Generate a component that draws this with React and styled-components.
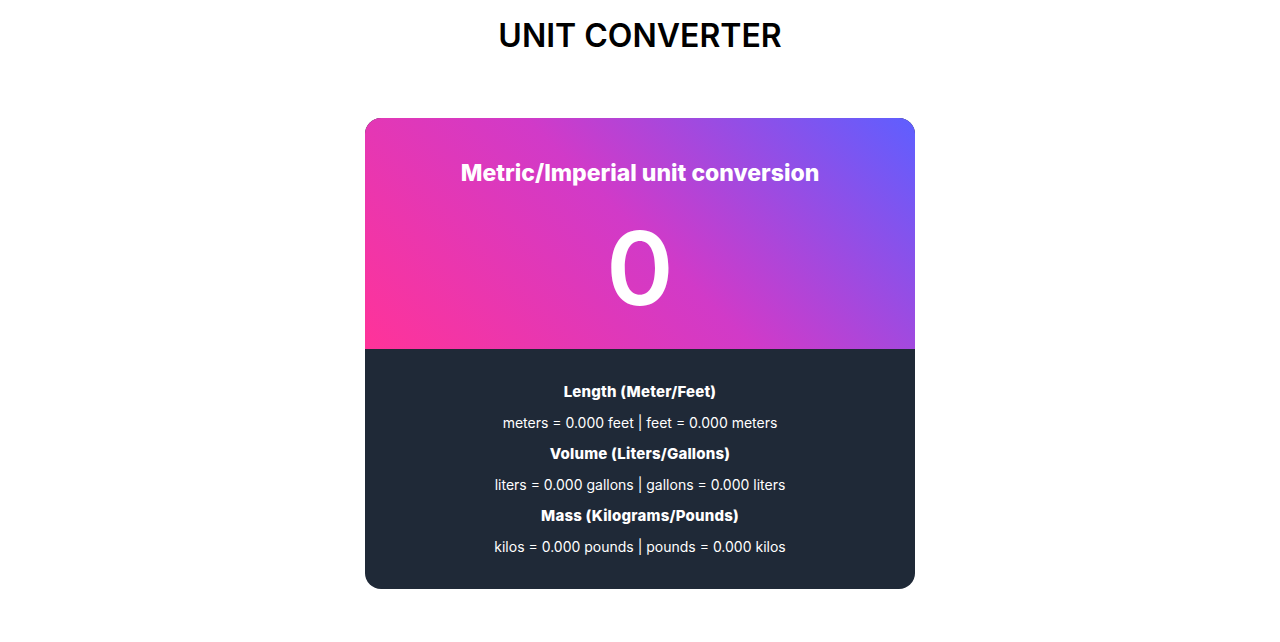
import React from "react";
import styled, { createGlobalStyle } from "styled-components";

const GlobalStyle = createGlobalStyle`
  body {
    margin: 0;
    background: #ffffff;
    font-family: Inter, "Noto Sans", sans-serif;
  }
`;

const conversions = [
  { title: "Length (Meter/Feet)", left: "meters = 0.000 feet", right: "feet = 0.000 meters" },
  { title: "Volume (Liters/Gallons)", left: "liters = 0.000 gallons", right: "gallons = 0.000 liters" },
  { title: "Mass (Kilograms/Pounds)", left: "kilos = 0.000 pounds", right: "pounds = 0.000 kilos" },
];

const App = () => {
  return (
    <Page>
      <GlobalStyle />
      <Title>UNIT CONVERTER</Title>
      <Card>
        <Hero>
          <Subtitle>Metric/Imperial unit conversion</Subtitle>
          <BigNumber>0</BigNumber>
        </Hero>
        <Results>
          {conversions.map((c) => (
            <React.Fragment key={c.title}>
              <Heading>{c.title}</Heading>
              <Line>
                {c.left} <Sep>|</Sep> {c.right}
              </Line>
            </React.Fragment>
          ))}
        </Results>
      </Card>
    </Page>
  );
};

export default App;

const Page = styled.div`
  display: flex;
  flex-direction: column;
  align-items: center;
  padding-top: 16px;
`;

const Title = styled.h1`
  margin: 0;
  font-size: 32px;
  line-height: 40px;
  font-weight: 600;
  color: #000;
`;

const Card = styled.div`
  margin-top: 62px;
  width: 550px;
  border-radius: 16px;
  overflow: hidden;
  background: #1f2937;
`;

const Hero = styled.div`
  display: flex;
  flex-direction: column;
  align-items: center;
  padding: 40px 0 0;
  height: 231px;
  box-sizing: border-box;
  background: linear-gradient(45deg, #ff3399, #d13ac8 50%, #5e5fff);
  color: #fff;
`;

const Subtitle = styled.h2`
  margin: 0;
  font-size: 23px;
  line-height: 30px;
  font-weight: 800;
`;

const BigNumber = styled.div`
  margin-top: 28px;
  font-size: 102px;
  line-height: 104px;
  font-weight: 600;
`;

const Results = styled.div`
  display: flex;
  flex-direction: column;
  align-items: center;
  gap: 10px;
  padding: 32px 0;
  color: #fff;
  font-size: 14px;
  line-height: 21px;
`;

const Heading = styled.div`
  font-size: 15px;
  font-weight: 800;
  letter-spacing: 0.2px;
`;

const Line = styled.div`
  font-weight: 400;
`;

const Sep = styled.span`
  color: #fff;
`;
